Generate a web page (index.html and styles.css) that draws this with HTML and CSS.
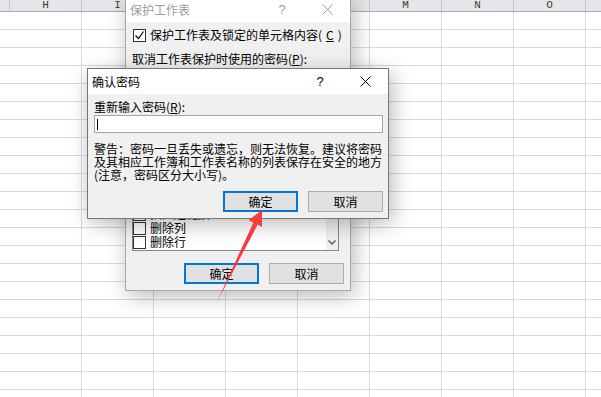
FILE: index.html
```html
<!DOCTYPE html>
<html lang="zh-CN">
<head>
    <meta charset="UTF-8">
    <meta name="viewport" content="width=device-width, initial-scale=1.0">
    <link rel="stylesheet" href="styles.css">
    <title>确认密码</title>
</head>
<body>
    <div class="sheet">
        <div class="sheet__head">
            <div class="sheet__col sheet__col--stub"></div>
            <div class="sheet__col">H</div>
            <div class="sheet__col">I</div>
            <div class="sheet__col">J</div>
            <div class="sheet__col">K</div>
            <div class="sheet__col">L</div>
            <div class="sheet__col">M</div>
            <div class="sheet__col">N</div>
            <div class="sheet__col">O</div>
            <div class="sheet__col"></div>
        </div>
        <div class="sheet__body"></div>
    </div>

    <!-- dialog behind: protect sheet -->
    <div class="dialog dialog--back">
        <div class="dialog__title">
            <span class="dialog__caption">保护工作表</span>
            <span class="dialog__help">?</span>
            <span class="dialog__close">
                <svg width="11" height="11" viewBox="0 0 11 11"><path d="M0.5 0.5l10 10M10.5 0.5l-10 10"></path></svg>
            </span>
        </div>
        <div class="dialog__body dialog__body--protect">
            <label class="check-row check-row--top">
                <span class="check-box">
                    <svg width="11" height="11" viewBox="0 0 11 11"><path d="M1.5 5.5l3 3 5-7"></path></svg>
                </span>
                保护工作表及锁定的单元格内容(<u>C</u>)
            </label>
            <div class="field-label field-label--pwd">取消工作表保护时使用的密码(<u>P</u>):</div>
            <div class="text-input text-input--short"></div>
            <div class="field-label field-label--allow">允许此工作表的所有用户进行(<u>O</u>):</div>
            <div class="listbox">
                <div class="listbox__items">
                    <label class="check-row"><span class="check-box"></span>设置列格式</label>
                    <label class="check-row"><span class="check-box"></span>设置行格式</label>
                    <label class="check-row"><span class="check-box"></span>插入列</label>
                    <label class="check-row"><span class="check-box"></span>插入行</label>
                    <label class="check-row"><span class="check-box"></span>插入超链接</label>
                    <label class="check-row"><span class="check-box"></span>删除列</label>
                    <label class="check-row"><span class="check-box"></span>删除行</label>
                </div>
                <div class="listbox__scroll">
                    <svg width="8" height="5" viewBox="0 0 8 5"><path d="M0.5 0.5l3.5 3.5 3.5-3.5"></path></svg>
                </div>
            </div>
            <div class="buttons buttons--back">
                <div class="btn btn--default">确定</div>
                <div class="btn">取消</div>
            </div>
        </div>
    </div>

    <!-- dialog in front: confirm password -->
    <div class="dialog dialog--front">
        <div class="dialog__title">
            <span class="dialog__caption">确认密码</span>
            <span class="dialog__help">?</span>
            <span class="dialog__close">
                <svg width="11" height="11" viewBox="0 0 11 11"><path d="M0.5 0.5l10 10M10.5 0.5l-10 10"></path></svg>
            </span>
        </div>
        <div class="dialog__body dialog__body--confirm">
            <div class="field-label">重新输入密码(<u>R</u>):</div>
            <div class="text-input"><span class="text-input__caret"></span></div>
            <p class="warning">警告：密码一旦丢失或遗忘，则无法恢复。建议将密码<br>及其相应工作簿和工作表名称的列表保存在安全的地方<br>(注意，密码区分大小写)。</p>
            <div class="buttons">
                <div class="btn btn--default">确定</div>
                <div class="btn">取消</div>
            </div>
        </div>
    </div>

    <svg class="pointer-arrow" width="601" height="397" viewBox="0 0 601 397">
        <polygon points="262,210 262,227 257.6,224.6 217,302 253.4,222.4 248.6,220.2"></polygon>
    </svg>
</body>
</html>
```

FILE: styles.css
```css
* {
    box-sizing: border-box;
}

body {
    margin: 0;
    padding: 0;
    position: relative;
    width: 601px;
    height: 397px;
    overflow: hidden;
    background-color: #ffffff;
    font-family: "Noto Sans CJK SC", sans-serif;
    font-size: 12px;
    color: #000000;
}

/* spreadsheet underneath */
.sheet__head {
    display: flex;
    height: 12px;
    overflow: hidden;
    background-color: #e4e6e9;
    border-bottom: 1px solid #abadb0;
}
.sheet__col {
    flex: 0 0 72px;
    border-right: 1px solid #c6c8cb;
    text-align: center;
    font-family: "Liberation Mono", monospace;
    font-size: 11px;
    line-height: 10px;
    color: #3a3a3a;
}
.sheet__col--stub {
    flex-basis: 10px;
}
.sheet__body {
    height: 385px;
    background-image:
        repeating-linear-gradient(to right, transparent 0 71px, #dadada 71px 72px),
        repeating-linear-gradient(to bottom, transparent 0 17px, #dadada 17px 18px);
    background-position: 10px 0, 0 0;
}

/* windows */
.dialog {
    position: absolute;
    display: flex;
    flex-direction: column;
    background-color: #f0f0f0;
    border: 1px solid #767676;
    box-shadow: 3px 5px 20px rgba(0, 0, 0, 0.28);
}
.dialog--back {
    left: 125px;
    top: -4px;
    width: 226px;
    height: 295px;
    border-color: #a8a8a8;
}
.dialog--front {
    left: 87px;
    top: 68px;
    width: 302px;
    height: 151px;
}
.dialog__title {
    flex: none;
    display: flex;
    align-items: center;
    height: 25px;
    padding-left: 4px;
    background-color: #ffffff;
}
.dialog__caption {
    flex: 1;
    line-height: 14px;
}
.dialog__help {
    width: 44px;
    text-align: center;
    font-family: "Liberation Sans", sans-serif;
    font-size: 13px;
}
.dialog__close {
    width: 46px;
    display: flex;
    justify-content: center;
}
.dialog__close svg {
    fill: none;
    stroke: #000000;
    stroke-width: 1;
}
.dialog--back .dialog__title {
    color: #9c9c9c;
}
.dialog--back .dialog__close svg {
    stroke: #9c9c9c;
}

.dialog__body {
    flex: 1;
    display: flex;
    flex-direction: column;
}
.dialog__body--protect {
    padding: 0 6px 6px 6px;
}
.dialog__body--confirm {
    padding: 6px 5px 5px 6px;
}

/* form parts */
.field-label {
    height: 14px;
    line-height: 14px;
    white-space: nowrap;
}
.field-label--pwd {
    margin-top: 10px;
}
.field-label--allow {
    margin-top: 6px;
}
.text-input {
    display: flex;
    align-items: center;
    height: 18px;
    margin-top: 1px;
    background-color: #ffffff;
    border: 1px solid #a5a5a5;
}
.text-input--short {
    margin: 2px 5px 0 0;
}
.text-input__caret {
    width: 1px;
    height: 11px;
    margin-left: 2px;
    background-color: #000000;
}
.warning {
    margin: 9px 0 0;
    line-height: 13px;
    white-space: nowrap;
}

.check-row {
    display: flex;
    align-items: center;
    gap: 4px;
    height: 14px;
    line-height: 14px;
    white-space: nowrap;
    flex: none;
}
.check-row--top {
    margin: 6px 0 0 1px;
}
.check-box {
    display: flex;
    align-items: center;
    justify-content: center;
    width: 13px;
    height: 13px;
    background-color: #ffffff;
    border: 1px solid #333333;
}
.check-box svg {
    fill: none;
    stroke: #000000;
    stroke-width: 1.2;
}

.listbox {
    display: flex;
    height: 145px;
    margin-right: 5px;
    background-color: #ffffff;
    border: 1px solid #828790;
    overflow: hidden;
}
.listbox__items {
    flex: 1;
    display: flex;
    flex-direction: column;
    justify-content: flex-end;
    padding-bottom: 1px;
}
.listbox__scroll {
    width: 12px;
    display: flex;
    align-items: flex-end;
    justify-content: center;
    padding-bottom: 5px;
    background-color: #f0f0f0;
}
.listbox__scroll svg {
    fill: none;
    stroke: #606060;
    stroke-width: 1.5;
}

.buttons {
    display: flex;
    justify-content: flex-end;
    gap: 10px;
    margin-top: 10px;
}
.buttons--back {
    margin-top: 12px;
}
.btn {
    display: flex;
    align-items: center;
    justify-content: center;
    width: 75px;
    height: 21px;
    background-color: #e1e1e1;
    border: 1px solid #adadad;
    line-height: 14px;
}
.btn--default {
    border: 2px solid #0078d7;
}

/* red pointer drawn over the screenshot */
.pointer-arrow {
    position: absolute;
    left: 0;
    top: 0;
    pointer-events: none;
}
.pointer-arrow polygon {
    fill: #f43d3d;
}
```
